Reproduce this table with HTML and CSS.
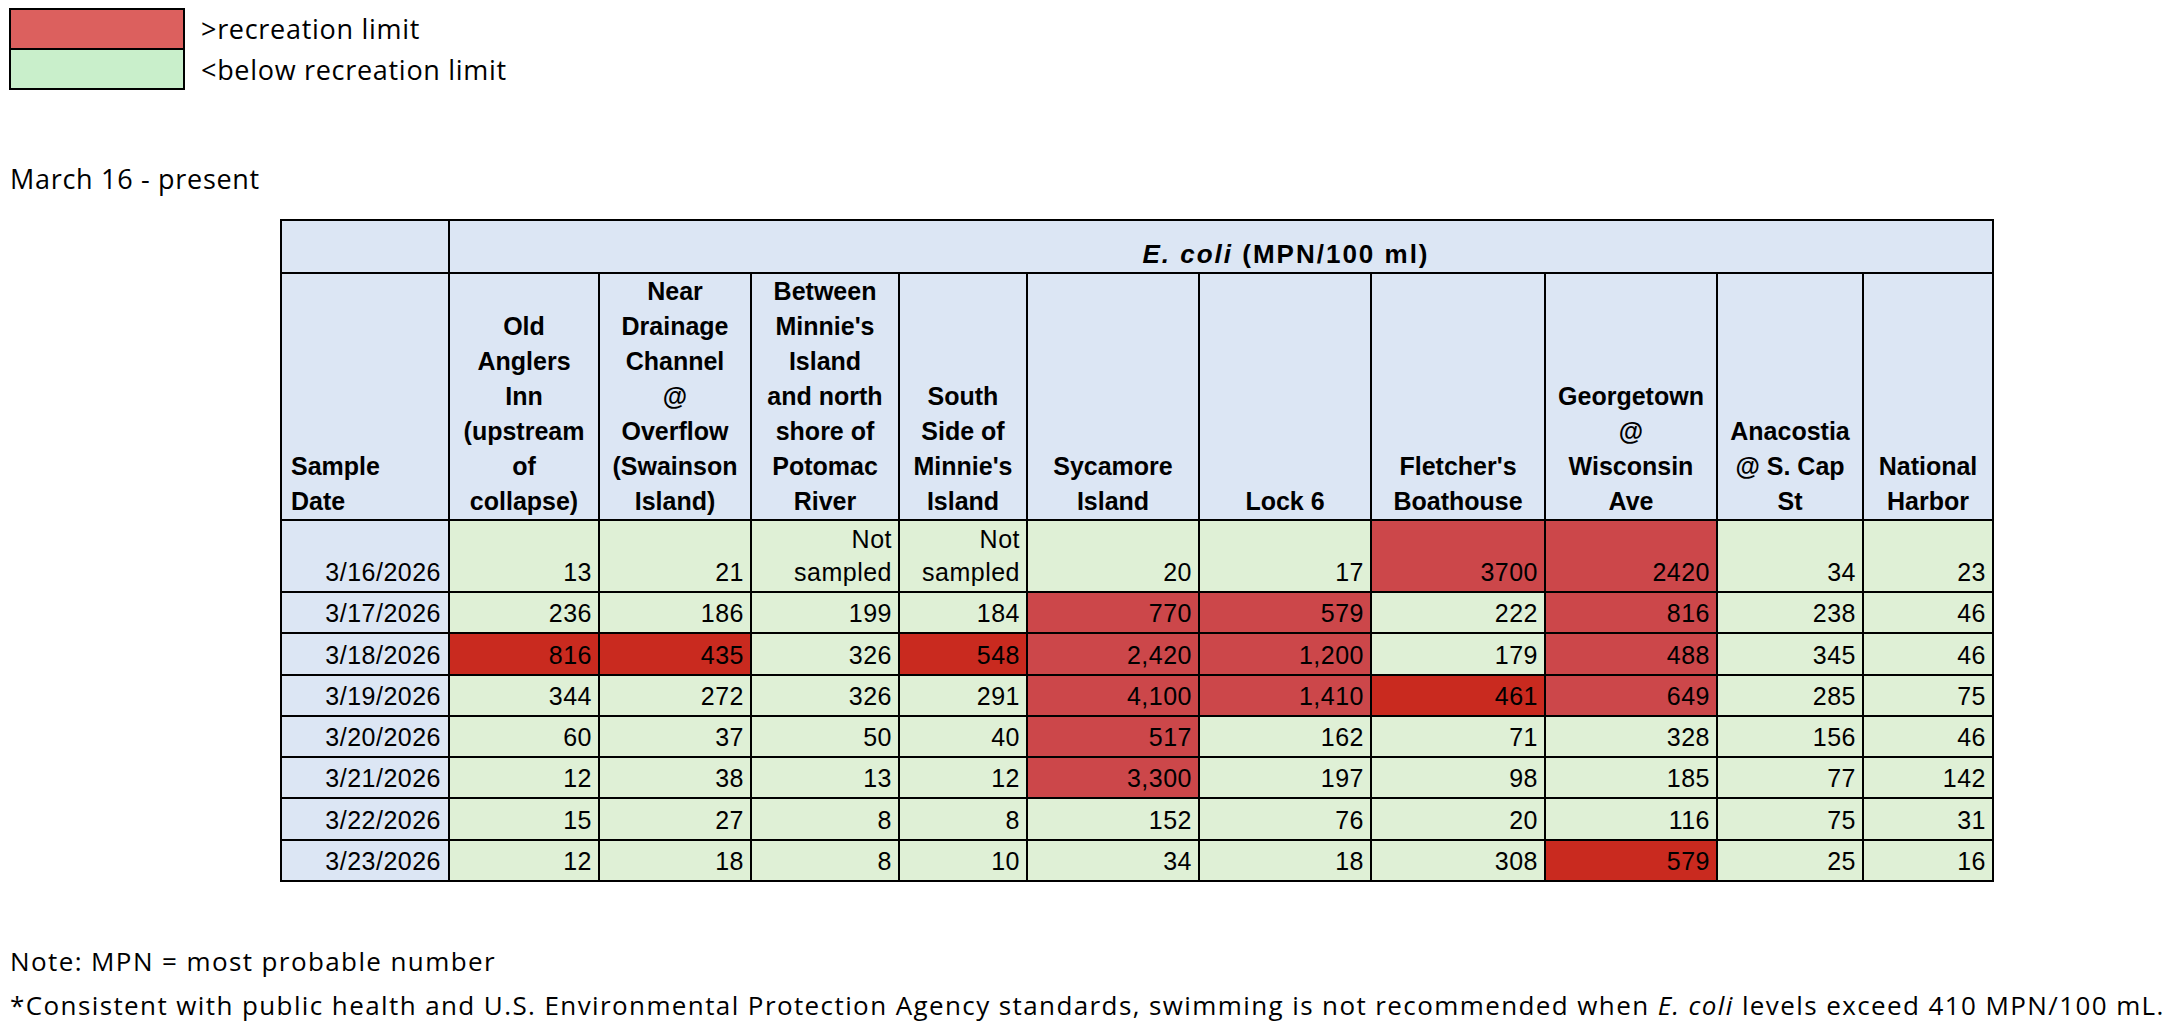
FILE: index.html
```html
<!DOCTYPE html>
<html lang="en">
<head>
<meta charset="utf-8">
<title>E. coli sampling</title>
<link rel="stylesheet" href="styles.css">
</head>
<body>
<div class="legend">
  <div class="legend-row">
    <span class="swatch swatch-red"></span>
    <span class="legend-text">&gt;recreation limit</span>
  </div>
  <div class="legend-row">
    <span class="swatch swatch-green"></span>
    <span class="legend-text">&lt;below recreation limit</span>
  </div>
</div>

<p class="period">March 16 - present</p>

<table class="data">
  <colgroup>
    <col class="c-date"><col class="c1"><col class="c2"><col class="c3"><col class="c4"><col class="c5"><col class="c6"><col class="c7"><col class="c8"><col class="c9"><col class="c10">
  </colgroup>
  <thead>
    <tr class="h1">
      <th class="hd"></th>
      <th class="hd ecoli" colspan="10"><i>E. coli</i> (MPN/100 ml)</th>
    </tr>
    <tr class="h2">
      <th class="hd left">Sample<br>Date</th>
      <th class="hd">Old<br>Anglers<br>Inn<br>(upstream<br>of<br>collapse)</th>
      <th class="hd">Near<br>Drainage<br>Channel<br>@<br>Overflow<br>(Swainson<br>Island)</th>
      <th class="hd">Between<br>Minnie's<br>Island<br>and north<br>shore of<br>Potomac<br>River</th>
      <th class="hd">South<br>Side of<br>Minnie's<br>Island</th>
      <th class="hd">Sycamore<br>Island</th>
      <th class="hd">Lock 6</th>
      <th class="hd">Fletcher's<br>Boathouse</th>
      <th class="hd">Georgetown<br>@<br>Wisconsin<br>Ave</th>
      <th class="hd">Anacostia<br>@ S. Cap<br>St</th>
      <th class="hd">National<br>Harbor</th>
    </tr>
  </thead>
  <tbody>
    <tr class="r-tall">
      <td class="date">3/16/2026</td>
      <td class="ok">13</td><td class="ok">21</td><td class="ok">Not<br>sampled</td><td class="ok">Not<br>sampled</td>
      <td class="ok">20</td><td class="ok">17</td><td class="hi">3700</td><td class="hi">2420</td><td class="ok">34</td><td class="ok">23</td>
    </tr>
    <tr>
      <td class="date">3/17/2026</td>
      <td class="ok">236</td><td class="ok">186</td><td class="ok">199</td><td class="ok">184</td>
      <td class="hi">770</td><td class="hi">579</td><td class="ok">222</td><td class="hi">816</td><td class="ok">238</td><td class="ok">46</td>
    </tr>
    <tr>
      <td class="date">3/18/2026</td>
      <td class="dk">816</td><td class="dk">435</td><td class="ok">326</td><td class="dk">548</td>
      <td class="hi">2,420</td><td class="hi">1,200</td><td class="ok">179</td><td class="hi">488</td><td class="ok">345</td><td class="ok">46</td>
    </tr>
    <tr>
      <td class="date">3/19/2026</td>
      <td class="ok">344</td><td class="ok">272</td><td class="ok">326</td><td class="ok">291</td>
      <td class="hi">4,100</td><td class="hi">1,410</td><td class="dk">461</td><td class="hi">649</td><td class="ok">285</td><td class="ok">75</td>
    </tr>
    <tr>
      <td class="date">3/20/2026</td>
      <td class="ok">60</td><td class="ok">37</td><td class="ok">50</td><td class="ok">40</td>
      <td class="hi">517</td><td class="ok">162</td><td class="ok">71</td><td class="ok">328</td><td class="ok">156</td><td class="ok">46</td>
    </tr>
    <tr>
      <td class="date">3/21/2026</td>
      <td class="ok">12</td><td class="ok">38</td><td class="ok">13</td><td class="ok">12</td>
      <td class="hi">3,300</td><td class="ok">197</td><td class="ok">98</td><td class="ok">185</td><td class="ok">77</td><td class="ok">142</td>
    </tr>
    <tr>
      <td class="date">3/22/2026</td>
      <td class="ok">15</td><td class="ok">27</td><td class="ok">8</td><td class="ok">8</td>
      <td class="ok">152</td><td class="ok">76</td><td class="ok">20</td><td class="ok">116</td><td class="ok">75</td><td class="ok">31</td>
    </tr>
    <tr>
      <td class="date">3/23/2026</td>
      <td class="ok">12</td><td class="ok">18</td><td class="ok">8</td><td class="ok">10</td>
      <td class="ok">34</td><td class="ok">18</td><td class="ok">308</td><td class="dk">579</td><td class="ok">25</td><td class="ok">16</td>
    </tr>
  </tbody>
</table>

<div class="notes">
  <p class="note">Note: MPN = most probable number</p>
  <p class="note">*Consistent with public health and U.S. Environmental Protection Agency standards, swimming is not recommended when <i>E. coli</i> levels exceed 410 MPN/100 mL.</p>
</div>
</body>
</html>
```

FILE: styles.css
```css
html, body {
  margin: 0;
  padding: 0;
  background: #ffffff;
  color: #000000;
}

body {
  font-family: "Open Sans", "Liberation Sans", sans-serif;
}

/* Legend */
.legend {
  display: flex;
  flex-direction: column;
  padding: 8px 0 0 9px;
}

.legend-row {
  display: flex;
  align-items: center;
  gap: 16px;
}

.swatch {
  display: block;
  width: 172px;
  height: 38px;
  border: 2px solid #000;
}

.swatch-red {
  background: #dc605e;
}

.swatch-green {
  background: #c9efcb;
  border-top: none;
  height: 38px;
}

.legend-text {
  font-size: 27px;
  letter-spacing: 0.7px;
  line-height: 40px;
}

.period {
  margin: 69px 0 0 10px;
  font-size: 27px;
  letter-spacing: 0.7px;
  line-height: 40px;
}

/* Table */
.data {
  margin: 20px 0 0 280px;
  border-collapse: collapse;
  table-layout: fixed;
  width: 1714px;
  font-family: "Liberation Sans", Arial, sans-serif;
  font-size: 25px;
}

.c-date { width: 168px; }
.c1 { width: 150px; }
.c2 { width: 152px; }
.c3 { width: 148px; }
.c4 { width: 128px; }
.c5 { width: 172px; }
.c6 { width: 172px; }
.c7 { width: 174px; }
.c8 { width: 172px; }
.c9 { width: 146px; }
.c10 { width: 130px; }

.data th,
.data td {
  border: 2px solid #000;
  padding: 0 6px 0 6px;
  vertical-align: bottom;
  white-space: nowrap;
  overflow: hidden;
}

.hd {
  background: #dce6f4;
  font-weight: bold;
  text-align: center;
  line-height: 35px;
}

.hd.left {
  text-align: left;
  padding-left: 9px;
}

.h1 {
  height: 53px;
}

.h1 .ecoli {
  padding: 0 0 3px 130px;
  line-height: 30px;
  font-size: 26px;
  letter-spacing: 2px;
}

.h2 {
  height: 245px;
}

.data tbody tr {
  height: 41.3px;
}

.data tbody tr.r-tall {
  height: 72px;
}

.data td {
  text-align: right;
  line-height: 33px;
  padding-bottom: 2px;
  letter-spacing: 0.5px;
}

.data td.date {
  background: #dce6f4;
  padding-right: 7px;
}

.ok {
  background: #dff0d6;
}

.hi {
  background: #cc474a;
}

.dk {
  background: #c92a1f;
}

/* Notes */
.notes {
  margin-top: 57px;
  padding-left: 10px;
}

.note {
  margin: 0;
  font-size: 26px;
  letter-spacing: 1.4px;
  line-height: 44px;
  white-space: nowrap;
}
```
